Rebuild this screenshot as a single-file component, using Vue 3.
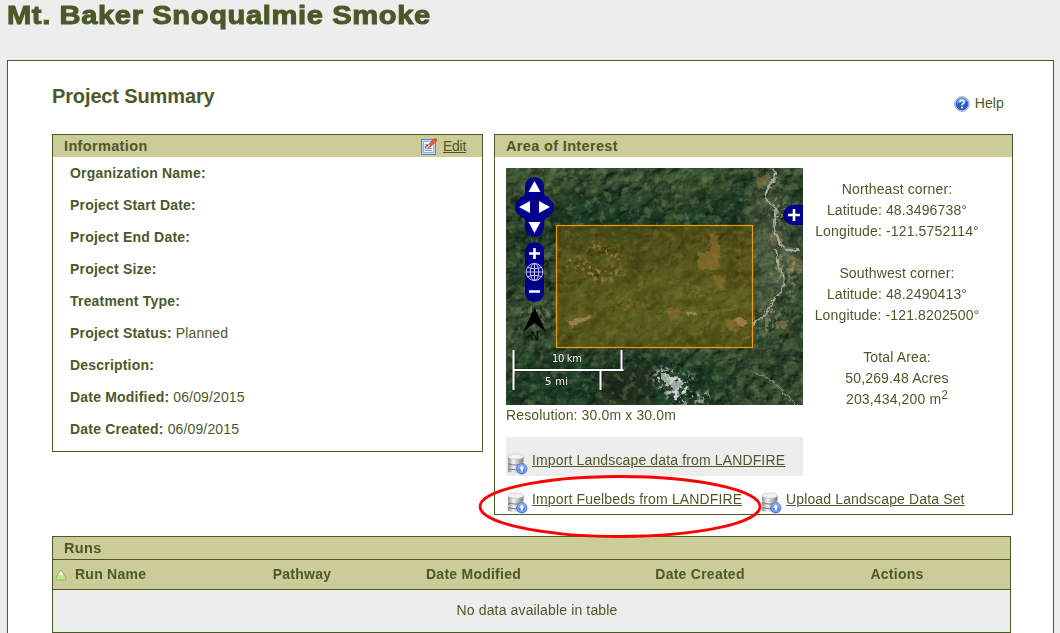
<script setup>
const info = [
  { label: 'Organization Name:', value: '' },
  { label: 'Project Start Date:', value: '' },
  { label: 'Project End Date:', value: '' },
  { label: 'Project Size:', value: '' },
  { label: 'Treatment Type:', value: '' },
  { label: 'Project Status:', value: 'Planned' },
  { label: 'Description:', value: '' },
  { label: 'Date Modified:', value: '06/09/2015' },
  { label: 'Date Created:', value: '06/09/2015' },
]
const corners = [
  { name: 'Northeast corner:', lat: '48.3496738°', lon: '-121.5752114°' },
  { name: 'Southwest corner:', lat: '48.2490413°', lon: '-121.8202500°' },
]
const columns = ['Pathway', 'Date Modified', 'Date Created', 'Actions']
</script>

<template>
  <div class="page">
    <svg class="defs" width="0" height="0" aria-hidden="true">
      <defs>
        <linearGradient id="metal" x1="0" x2="1">
          <stop offset="0" stop-color="#8e8e92" />
          <stop offset=".35" stop-color="#f4f4f6" />
          <stop offset="1" stop-color="#77777c" />
        </linearGradient>
        <linearGradient id="blue" x1="0" y1="0" x2="0" y2="1">
          <stop offset="0" stop-color="#7fa8f2" />
          <stop offset="1" stop-color="#2f66d8" />
        </linearGradient>
        <symbol id="db" viewBox="0 0 22 22">
          <path d="M2 15v3.200C2 20.500 17.500 20.500 17.500 18.200V15Z" fill="url(#metal)" />
          <path d="M2 14.500c1 3 14.500 3 15.500 0" fill="none" stroke="#77777e" stroke-width="1" />
          <path d="M2 10v3.400C2 16 17.500 16 17.500 13.400V10Z" fill="url(#metal)" />
          <path d="M2 9.800c1 3 14.500 3 15.500 0" fill="none" stroke="#77777e" stroke-width="1" />
          <path d="M2 3.500v5C2 11.500 17.500 11.500 17.500 8.500v-5Z" fill="url(#metal)" />
          <ellipse cx="9.750" cy="3.600" rx="7.700" ry="2.700" fill="#f3f3f5" stroke="#c4c4ca" stroke-width=".7" />
          <circle cx="15.800" cy="15.800" r="5.200" fill="url(#blue)" stroke="#4a78d8" stroke-width=".8" />
          <circle cx="15.800" cy="15.800" r="4" fill="none" stroke="#a9c5fa" stroke-width=".7" />
          <path d="M15.800 12.600l2.800 3h-1.700v2.800h-2.200v-2.800H13Z" fill="#fff" />
        </symbol>
      </defs>
    </svg>

    <h1>Mt. Baker Snoqualmie Smoke</h1>

    <main class="panel">
      <div class="heading">
        <h2>Project Summary</h2>
        <div class="help">
          <svg width="16" height="16" viewBox="0 0 16 16">
            <circle cx="8" cy="8" r="7.300" fill="#e4e9f2" stroke="#8292b4" stroke-width=".9" />
            <circle cx="8" cy="8" r="5.900" fill="#2860d0" stroke="#2049a2" stroke-width=".7" />
            <path d="M3 7a5 5 0 0 1 10-1.500Q8 5 3 8Z" fill="#7ba6ef" opacity=".65" />
            <path d="M5.900 6.100Q6 4.100 8 4.100t2.100 1.800Q10.100 7 8.800 7.700 8 8.200 8 9.300" fill="none" stroke="#fff" stroke-width="1.700" />
            <rect x="7.100" y="10.600" width="1.800" height="1.700" fill="#fff" />
          </svg>
          <span>Help</span>
        </div>
      </div>

      <div class="boxes">
        <section class="box info">
          <header class="bar">
            <span class="bar-title">Information</span>
            <a class="edit">
              <svg width="16" height="17" viewBox="0 0 16 17">
                <rect x=".5" y="1.500" width="14" height="15" fill="#c3d7f4" stroke="#5d83c0" />
                <rect x="2.500" y="3.500" width="10" height="11" fill="#eef5ff" stroke="#93b2df" />
                <path d="M4 6.500h3M4 10.500h7M4 12.500h7" stroke="#7f9fce" />
                <path d="M4 9.500q2-3 3-1 1 1 3-.5" fill="none" stroke="#25409a" stroke-width="1.200" />
                <path d="M6.500 9l1.200-2.800L13 .8l2.600 2.200-5.800 5.400Z" fill="#f05a2c" stroke="#d5431f" stroke-width=".6" />
                <path d="M6.300 9.200l1.300-2.800 1.800 1.700Z" fill="#f4d7a2" />
                <path d="M13 1l1.300-.8L16 1.600l-.7 1.200Z" fill="#f8261a" />
              </svg>
              <span class="link">Edit</span>
            </a>
          </header>
          <dl>
            <div v-for="row in info" :key="row.label" class="row">
              <dt>{{ row.label }}</dt>
              <dd>{{ row.value }}</dd>
            </div>
          </dl>
        </section>

        <section class="box area">
          <header class="bar"><span class="bar-title">Area of Interest</span></header>
          <div class="area-body">
            <div class="map-col">
              <svg class="map" width="297" height="237" viewBox="0 0 297 237">
                <defs>
                  <filter id="terrain" x="0" y="0" width="100%" height="100%" color-interpolation-filters="sRGB">
                    <feTurbulence type="fractalNoise" baseFrequency=".07 .085" numOctaves="5" seed="14" result="n" />
                    <feColorMatrix in="n" values="0 0 0 0 0  0 0 0 0 0  0 0 0 0 0  1 0 0 0 0" result="h" />
                    <feDiffuseLighting in="h" surfaceScale="3.500" lighting-color="#3f5d3b">
                      <feDistantLight azimuth="225" elevation="55" />
                    </feDiffuseLighting>
                  </filter>
                  <filter id="patches" x="0" y="0" width="100%" height="100%" color-interpolation-filters="sRGB">
                    <feTurbulence type="fractalNoise" baseFrequency=".13" numOctaves="5" seed="21" />
                    <feColorMatrix values="0 0 0 0 .5  0 0 0 0 .56  0 0 0 0 .36  5 0 0 0 -2.600" />
                  </filter>
                  <filter id="shade" x="0" y="0" width="100%" height="100%" color-interpolation-filters="sRGB">
                    <feTurbulence type="fractalNoise" baseFrequency=".05" numOctaves="5" seed="5" />
                    <feColorMatrix values="0 0 0 0 .04  0 0 0 0 .1  0 0 0 0 .06  0 4 0 0 -1.900" />
                  </filter>
                  <filter id="soft"><feGaussianBlur stdDeviation="8" /></filter>
                  <filter id="rough" x="-20%" y="-20%" width="140%" height="140%" color-interpolation-filters="sRGB">
                    <feTurbulence type="fractalNoise" baseFrequency=".25" numOctaves="3" seed="3" />
                    <feDisplacementMap in="SourceGraphic" scale="6" xChannelSelector="R" yChannelSelector="G" />
                    <feGaussianBlur stdDeviation=".35" />
                  </filter>
                  <filter id="speckle" x="-20%" y="-20%" width="140%" height="140%" color-interpolation-filters="sRGB">
                    <feTurbulence type="fractalNoise" baseFrequency=".22" numOctaves="3" seed="9" result="t" />
                    <feColorMatrix in="t" values="0 0 0 0 0  0 0 0 0 0  0 0 0 0 0  7 0 0 0 -3.600" result="m" />
                    <feGaussianBlur in="SourceGraphic" stdDeviation="3" result="g" />
                    <feComposite in="g" in2="m" operator="in" />
                  </filter>
                </defs>
                <rect width="297" height="237" filter="url(#terrain)" />
                <g filter="url(#soft)">
                  <path d="M40 32h100l30 30-50 12-80-6ZM185 15h65v45h-80ZM0 190h95l65 10-20 37H0Z" fill="#0d2013" opacity=".4" />
                  <path d="M95 190l75-8 70 30-25 30H90ZM255 50l42-35v70ZM15 10h22v110H5Z" fill="#102419" opacity=".4" />
                  <path d="M60 120l150-30 40 50-30 35-155-5ZM168 0l45-2 10 20-40 15ZM0 0h60v20H0Z" fill="#6b8a48" opacity=".3" />
                  <path d="M255 0l15 50 20 40-25 45-25 35V110l10-50Z" fill="#9a9c78" opacity=".25" />
                </g>
                <rect width="297" height="237" filter="url(#shade)" opacity=".4" />
                <rect width="297" height="237" filter="url(#patches)" opacity=".38" />
                <g filter="url(#rough)" fill="#b9865e">
                  <path d="M203 67h9v20h-5ZM192 84h20v18h-20ZM204 77h10v12h-9Z" opacity=".55" />
                  <path d="M218 151h15v14l-10-3ZM206 107l14 2-3 14-8-7ZM160 140h14v8l-9 5ZM270 153h12v7h-12Z" opacity=".45" />
                  <path d="M282 86l15 7v14l-14-4ZM265 62l10 1 2 10-12 5ZM250 10l13-4 3 10-13 6Z" opacity=".35" />
                  <path d="M230 152l5-5 3 5 5 2-6 4-6-2ZM181 145h9v2h-9ZM61 154l12-4 12-3-3 5-16 7Z" fill="#dfb597" opacity=".7" />
                </g>
                <g filter="url(#speckle)" fill="#cf9c72">
                  <path d="M74 93l14 3 8 5 18-2 4 10-30 6-7-7-10-8ZM82 72l20 5 18 16-5 4-18-12-14-4ZM60 88h15v12H60Z" opacity=".9" />
                  <path d="M165 125l20-9 28 8-14 10ZM90 134l35-6 30 8-30 8ZM225 88l8-10 6 15-9 16ZM192 155l14-7 12 10-14 6Z" opacity=".4" />
                  <path d="M258 45l12-18 20 12-10 25ZM265 105l12-25 20 22-12 35ZM245 155l18-22 15 12-15 25ZM12 145l14-12 20 10-12 18Z" fill="#b9a98a" opacity=".5" />
                </g>
                <g fill="none" filter="url(#rough)" stroke-linejoin="round">
                  <path d="M268 0q3 11-4 17-7 9-2 17 11 5 8 12-4 12 2 24 2 9 9 12l13 0" stroke="#a3aca0" stroke-width="2.400" />
                  <path d="M270 81l2 15 6 12-2 14-10 12-7 13-14 10" stroke="#a9ab9b" stroke-width="1.800" />
                  <path d="M245 168l-8 4M248 204l17 8 17 17 10 8" stroke="#7b8d76" stroke-width="1.300" />
                  <path d="M150 144h60l30-7" stroke="#bdb57b" opacity=".4" />
                </g>
                <g filter="url(#speckle)" fill="#d6d8d8">
                  <path d="M150 203l14-7 7 10 19 1-7 8 6 14-9 8h-16l-4-12-13-11Z" />
                  <path d="M186 227l16-4 6 7-16 7Z" opacity=".9" />
                </g>
                <path d="M155 206l8 1 5 6 12 1-7 6 2 9-6-4-6-8-8-6Z" fill="#c9cdce" filter="url(#rough)" opacity=".75" />
                <rect x="50.500" y="57.500" width="196" height="122" fill="#785c00" fill-opacity=".44" stroke="#f39a0c" stroke-width="1.200" />

                <g fill="#00008b">
                  <rect x="19" y="9" width="19" height="60" rx="9.500" />
                  <rect x="9" y="29" width="39" height="20" rx="10" />
                  <path d="M14 29q5 0 5-5h19q0 5 5 5v20q-5 0-5 5H19q0-5-5-5Z" />
                  <rect x="19" y="74" width="19" height="60" rx="9.500" />
                  <path d="M297 37h-10a10 10 0 0 0 0 20h10Z" />
                </g>
                <path d="M28.500 13l6 11h-12ZM28.500 65l6-11h-12ZM13 39l11-6v12ZM44 39l-11-6v12Z" fill="#fff" />
                <path d="M23 85.500h11M28.500 80v11M23 123.500h11M282 47h12M288 41v12" stroke="#fff" stroke-width="2.600" />
                <g fill="none" stroke="#d7dafc" stroke-width=".9">
                  <circle cx="28.500" cy="104" r="8.500" />
                  <ellipse cx="28.500" cy="104" rx="4.200" ry="8.500" />
                  <path d="M28.500 95.500v17M20 104h17M21.500 99.500q7 2.500 14 0M21.500 108.500q7-2.500 14 0" />
                </g>
                <path d="M28.500 140L40 164l-11.500-9L17 164Z" fill="#000" />
                <text x="28.500" y="172" class="north">N</text>
                <path d="M7.500 182v40M6 202h112M116 182v21.500M95 202v20" fill="none" stroke="#111" stroke-width="3.500" opacity=".4" />
                <path d="M7.500 182v40M6.500 202h111M115.500 182v21M94.500 202v20" fill="none" stroke="#fff" stroke-width="2" />
                <text x="61" y="194" class="scale" textLength="30">10 km</text>
                <text x="50.500" y="217" class="scale" textLength="23">5 mi</text>
              </svg>
              <div class="resolution">Resolution: 30.0m x 30.0m</div>
            </div>
            <div class="coords">
              <p v-for="c in corners" :key="c.name">
                {{ c.name }}<br />Latitude: {{ c.lat }}<br />Longitude: {{ c.lon }}
              </p>
              <p>Total Area:<br />50,269.48 Acres<br />203,434,200 m<sup>2</sup></p>
            </div>
          </div>
          <div class="import shaded">
            <svg class="db" width="22" height="22"><use href="#db" /></svg>
            <a class="link">Import Landscape data from LANDFIRE</a>
          </div>
          <div class="imports">
            <div class="import first">
              <svg class="db" width="22" height="22"><use href="#db" /></svg>
              <a class="link">Import Fuelbeds from LANDFIRE</a>
              <svg class="mark" width="284" height="66" viewBox="0 0 284 66">
                <ellipse cx="142" cy="32.500" rx="140" ry="30" fill="none" stroke="#f00" stroke-width="2.800" />
              </svg>
            </div>
            <div class="import">
              <svg class="db" width="22" height="22"><use href="#db" /></svg>
              <a class="link">Upload Landscape Data Set</a>
            </div>
          </div>
        </section>
      </div>

      <section class="runs">
        <div class="runs-title">Runs</div>
        <div class="head">
          <div class="name">
            <svg width="12" height="12" viewBox="0 0 12 12">
              <path d="M5 1.500h2l4 7.500q0 2-1.500 2h-7Q1 11 1 9Z" fill="#c5e87c" stroke="#8eb468" />
              <path d="M5.300 2.500h1.400L8.200 6H3.800Z" fill="#f6fbe8" />
            </svg>
            <span>Run Name</span>
          </div>
          <div v-for="c in columns" :key="c">{{ c }}</div>
        </div>
        <div class="empty">No data available in table</div>
      </section>
    </main>
  </div>
</template>

<style>
body { background: #ededed; overflow: hidden; }
</style>

<style scoped>
.page { box-sizing: border-box; width: 1060px; height: 633px; overflow: hidden; padding: 0 6px 0 7px; background: #ededed; color: #4b5929; font: 14px/21px "Liberation Sans", Arial, sans-serif; letter-spacing: .14px; }
.defs { display: block; height: 0; }
h1, h2, p, dl, dt, dd { margin: 0; }
h1 { height: 60px; font-size: 26px; line-height: 30px; letter-spacing: .55px; -webkit-text-stroke: 1px #4b5929; white-space: nowrap; transform: scaleX(1.12); transform-origin: 0 0; }
.panel { box-sizing: border-box; height: 640px; border: 1px solid #4b5929; background: #fff; padding: 0 40px 0 44px; }
.heading { display: flex; justify-content: space-between; height: 73px; padding-right: 9px; }
h2 { font-size: 20px; line-height: 26px; padding-top: 22px; letter-spacing: -.13px; }
.help { display: flex; gap: 5px; padding-top: 32px; height: 21px; align-items: center; }
.boxes { display: flex; gap: 11px; align-items: flex-start; }
.box { box-sizing: border-box; border: 1px solid #4b5929; }
.info { width: 431px; height: 318px; }
.area { width: 519px; height: 381px; }
.bar { box-sizing: border-box; display: flex; justify-content: space-between; height: 22px; background: #cccc99; padding: 0 16px 0 11px; line-height: 22px; }
.bar-title { font-weight: bold; font-size: 14.5px; letter-spacing: .35px; }
.edit { display: flex; gap: 6px; align-items: center; letter-spacing: -.3px; }
.link { text-decoration: underline; text-underline-offset: 1px; text-decoration-thickness: 1px; }
.row { display: flex; gap: 4px; height: 32px; line-height: 32px; padding-left: 17px; }
dt { font-weight: bold; letter-spacing: .2px; }
.area-body { display: flex; padding: 11px 0 0 11px; height: 269px; }
.map-col { width: 297px; }
.map { display: block; }
.north { font: bold 12px "Liberation Sans", Arial, sans-serif; letter-spacing: 0; text-anchor: middle; fill: #0b140b; }
.scale { font: 10px "DejaVu Sans", sans-serif; letter-spacing: 0; text-anchor: middle; fill: #fff; stroke: #111; stroke-width: 1.5px; stroke-opacity: .4; paint-order: stroke; }
.coords { width: 188px; padding-top: 11px; text-align: center; }
.coords p { margin-bottom: 21px; white-space: nowrap; }
sup { font-size: 12px; line-height: 0; vertical-align: 5px; }
.import { position: relative; display: flex; gap: 4px; box-sizing: border-box; height: 39px; padding-top: 13px; white-space: nowrap; }
.db { margin-top: 3px; flex: none; }
.shaded { width: 297px; margin-left: 11px; background: #ededed; }
.imports { display: flex; margin-left: 11px; }
.first { width: 254px; }
.mark { position: absolute; left: -28px; top: -2px; z-index: 2; }
.runs { box-sizing: border-box; width: 959px; height: 97px; margin-top: 21px; border: 1px solid #4b5929; background: #ededed; }
.runs-title { height: 22px; line-height: 22px; padding-left: 11px; background: #cccc99; font-weight: bold; font-size: 14.5px; letter-spacing: .35px; }
.head { box-sizing: border-box; display: grid; grid-template-columns: 150px 198px 145px 308px 86px; height: 31px; line-height: 29px; background: #cccc99; border: solid #4b5929; border-width: 1px 0; font-weight: bold; letter-spacing: .25px; text-align: center; }
.name { display: flex; align-items: center; gap: 8px; padding-left: 2px; }
.empty { height: 40px; line-height: 40px; text-align: center; padding-left: 11px; }
</style>
